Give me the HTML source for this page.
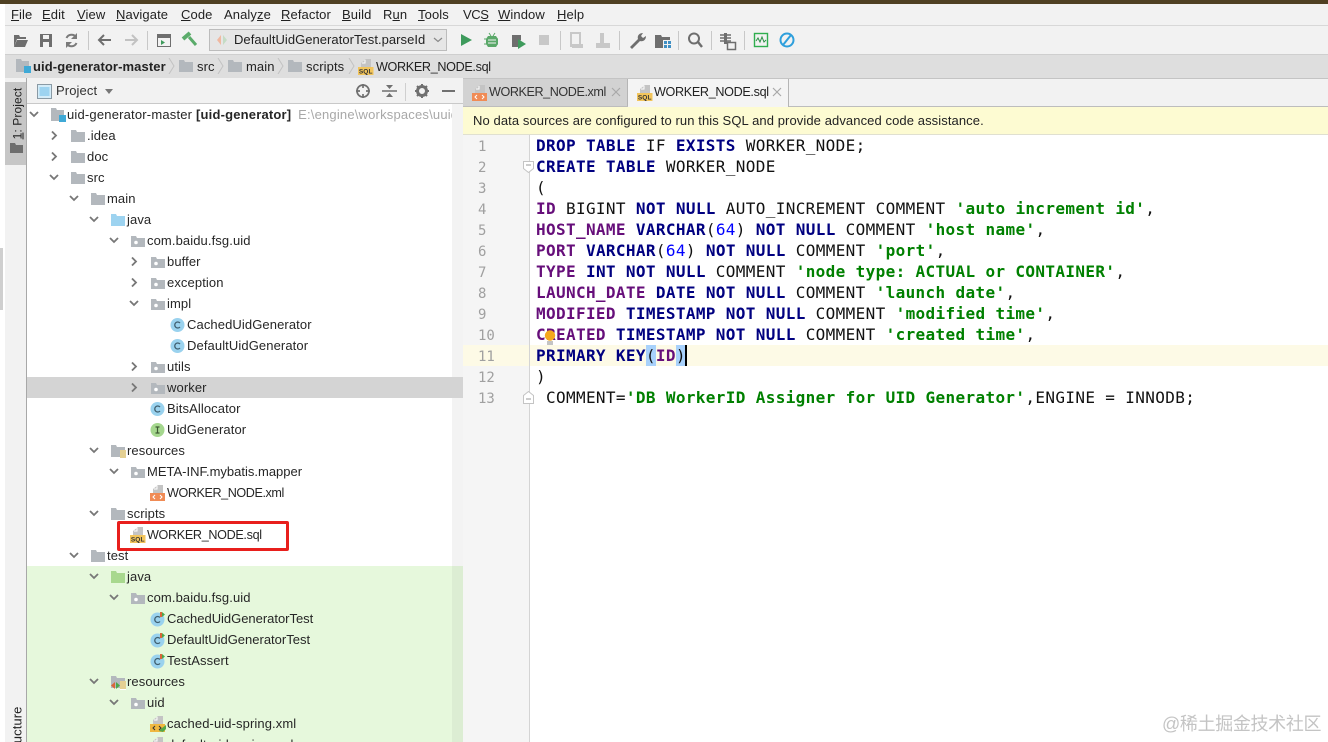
<!DOCTYPE html>
<html style="overflow:hidden;height:742px"><head><meta charset="utf-8"><style>
html,body{margin:0;padding:0}
body{width:1328px;height:742px;overflow:hidden;position:relative;background:#fff;font:13px/21px "Liberation Sans",sans-serif;color:#262626;letter-spacing:.1px}
#w{left:0;top:0;width:1328px;height:742px;overflow:hidden}
div,span.a,svg.a{position:absolute}
svg{display:block}
.m{top:4px;line-height:22px;white-space:nowrap;color:#222}
.m u{text-decoration:underline}
.sp{top:31px;width:1px;height:19px;background:#c8c8c8}
.r{left:0;height:21px;width:452px;white-space:nowrap}
.r .ar{left:calc(var(--x) - 5px);top:5px;width:12px;height:11px}
.r .ic{left:calc(var(--x) + 17px);top:3px;width:16px;height:16px}
.r .tx{left:calc(var(--x) + 34px);top:0}
.r .tx.q,.r .tx.x{top:1px}
.q{font-size:12.6px;letter-spacing:-.33px}
.x{font-size:12.6px;letter-spacing:-.42px}
.c{left:536px;height:21px;font:16px/21px "DejaVu Sans Mono",monospace;letter-spacing:.355px;white-space:pre;color:#111}
.n{left:478px;height:21px;font:14px/21px "DejaVu Sans Mono",monospace;letter-spacing:0;color:#a0a0a0}
b{font-weight:bold}
.k{color:#000080;font-weight:bold}.s{color:#008000;font-weight:bold}.p{color:#660e7a;font-weight:bold}.d{color:#0000ff}
.bc{top:55px;line-height:23px;white-space:nowrap;color:#222}
</style></head><body><div id="w">
<svg width="0" height="0" style="position:absolute"><defs>
<symbol id="dn" viewBox="0 0 12 11"><path d="M2 3l4 4 4-4" fill="none" stroke="#777" stroke-width="1.8"/></symbol>
<symbol id="rt" viewBox="0 0 12 11"><path d="M4 1.500l4 4-4 4" fill="none" stroke="#777" stroke-width="1.8"/></symbol>
<symbol id="f" viewBox="0 0 16 16"><path d="M1 2h5l1 2h8v10H1z" fill="#b3b8bd"/></symbol>
<symbol id="fb" viewBox="0 0 16 16"><path d="M1 2h5l1 2h8v10H1z" fill="#9dd3f0"/></symbol>
<symbol id="fg" viewBox="0 0 16 16"><path d="M1 2h5l1 2h8v10H1z" fill="#a8d88e"/></symbol>
<symbol id="pk" viewBox="0 0 16 16"><path d="M1 3h5l1 2h8v9H1z" fill="#b3b8bd"/><circle cx="6" cy="9.500" r="1.800" fill="#fff"/></symbol>
<symbol id="rs" viewBox="0 0 16 16"><path d="M1 2h5l1 2h8v10H1z" fill="#b3b8bd"/><rect x="10" y="7" width="7" height="9" fill="#fff"/><path d="M10 8h6M10 10h6M10 12h6M10 14h6" stroke="#c9a227"/></symbol>
<symbol id="rs2" viewBox="0 0 16 16"><path d="M1 2h5l1 2h8v10H1z" fill="#b3b8bd"/><rect x="10" y="7" width="7" height="9" fill="#fff"/><path d="M10 8h6M10 10h6M10 12h6M10 14h6" stroke="#c9a227"/><path d="M5 8l-4 3.500 4 3.500z" fill="#d9663a"/><path d="M6 8l4 3.500-4 3.500z" fill="#4aa84a"/></symbol>
<symbol id="cl" viewBox="0 0 16 16"><circle cx="7.500" cy="8" r="7" fill="#9ad2ee"/><path d="M10 6a3 3 0 1 0 0 4" fill="none" stroke="#3f5e6e" stroke-width="1.300"/></symbol>
<symbol id="ct" viewBox="0 0 16 16"><circle cx="7.500" cy="8.500" r="7" fill="#9ad2ee"/><path d="M10 6.500a3 3 0 1 0 0 4" fill="none" stroke="#3f5e6e" stroke-width="1.300"/><path d="M10 1h2v5h-2z" fill="#d9663a"/><path d="M12 1l3 2.500-3 2.500z" fill="#4aa84a"/></symbol>
<symbol id="in" viewBox="0 0 16 16"><circle cx="7.500" cy="8" r="7" fill="#a5d78e"/><path d="M5.500 5h4M5.500 11h4M7.500 5v6" fill="none" stroke="#3d5a33" stroke-width="1.200"/></symbol>
<symbol id="xm" viewBox="0 0 16 16"><path d="M8 0h5v8H3V4z" fill="#c4c4c4"/><path d="M7 1v3H4" fill="none" stroke="#fff"/><rect x="0" y="8" width="15" height="8" fill="#f08b55"/><path d="M5 10l-2 2 2 2M10 10l2 2-2 2" fill="none" stroke="#fff"/></symbol>
<symbol id="xs" viewBox="0 0 16 16"><path d="M8 0h5v8H3V4z" fill="#c4c4c4"/><path d="M7 1v3H4" fill="none" stroke="#fff"/><rect x="0" y="8" width="15" height="8" fill="#f0b840"/><path d="M5 10l-2 2 2 2M9 10l2 2-2 2" fill="none" stroke="#333"/><path d="M9 15l3-3 4-3 0 4-3 3z" fill="#55a84a"/></symbol>
<symbol id="sq" viewBox="0 0 16 16"><path d="M8 0h5v8H3V4z" fill="#c4c4c4"/><path d="M7 1v3H4" fill="none" stroke="#fff"/><rect x="0" y="8" width="15.500" height="8" fill="#f2c55c"/><text x="7.700" y="14.700" text-anchor="middle" font-family="Liberation Sans" font-weight="bold" font-size="6.500" fill="#333">SQL</text></symbol>
<symbol id="ro" viewBox="0 0 18 16"><path d="M1 1h5l1 2h7v11H1z" fill="#b3b8bd"/><rect x="9" y="8" width="7" height="7" fill="#3fa9d6"/></symbol>
</defs></svg>

<!-- chrome backgrounds -->
<div style="left:0;top:0;width:1328px;height:4px;background:#4f4023"></div>
<div style="left:5px;top:4px;width:1323px;height:74px;background:#f2f2f2"></div>
<div style="left:5px;top:25px;width:1323px;height:1px;background:#d8d8d8"></div>
<div style="left:5px;top:54px;width:1323px;height:24px;background:#dedede;border-top:1px solid #cfcfcf;box-sizing:border-box"></div>
<div style="left:0;top:248px;width:3px;height:62px;background:#cfcfcf"></div>
<div style="left:5px;top:78px;width:22px;height:664px;background:#f2f2f2;border-right:1px solid #a8a8a8;box-sizing:border-box"></div>
<div style="left:5px;top:82px;width:21px;height:83px;background:#c6c6c6"></div>
<div style="left:27px;top:78px;width:436px;height:26px;background:#f2f2f2;border-bottom:1px solid #c9c9c9;box-sizing:border-box"></div>
<div style="left:463px;top:78px;width:865px;height:29px;background:#f2f2f2;border-top:1px solid #c4c4c4;border-bottom:1px solid #bdbdbd;box-sizing:border-box"></div>

<!-- menu -->
<div class="m" style="left:11px"><u>F</u>ile</div>
<div class="m" style="left:42px"><u>E</u>dit</div>
<div class="m" style="left:77px"><u>V</u>iew</div>
<div class="m" style="left:116px"><u>N</u>avigate</div>
<div class="m" style="left:181px"><u>C</u>ode</div>
<div class="m" style="left:224px">Analy<u>z</u>e</div>
<div class="m" style="left:281px"><u>R</u>efactor</div>
<div class="m" style="left:342px"><u>B</u>uild</div>
<div class="m" style="left:383px">R<u>u</u>n</div>
<div class="m" style="left:418px"><u>T</u>ools</div>
<div class="m" style="left:463px;letter-spacing:-.4px">VC<u>S</u></div>
<div class="m" style="left:498px"><u>W</u>indow</div>
<div class="m" style="left:557px"><u>H</u>elp</div>

<!-- toolbar -->
<svg class="a" style="left:0;top:26px" width="810" height="28" viewBox="0 0 810 28" fill="none">
<path d="M14 9h5l1 2h6v2h-9l-3 8z" fill="#6e6e6e"/><path d="M17 14h11l-3 7H14z" fill="#6e6e6e"/>
<path d="M40 8h12v13H40z" fill="#6e6e6e"/><rect x="43" y="9" width="6" height="4" fill="#f2f2f2"/><rect x="43" y="16" width="6" height="5" fill="#f2f2f2"/>
<path d="M76 11a5.500 5.500 0 0 0-9.500 1M67 18a5.500 5.500 0 0 0 9.500-1" stroke="#7a7a7a" stroke-width="2"/><path d="M77 7v6h-6zM66 22v-6h6z" fill="#7a7a7a"/>
<path d="M99 14h12M104 9l-5 5 5 5" stroke="#6e6e6e" stroke-width="2"/>
<path d="M125 14h12M132 9l5 5-5 5" stroke="#c2c2c2" stroke-width="2"/>
<rect x="157.500" y="8.500" width="13" height="12" stroke="#6e6e6e"/><path d="M157 9h14v3h-14z" fill="#6e6e6e"/><path d="M161 14l4 2.500-4 2.500z" fill="#3e9b5c"/>
<path d="M189 11l7 8" stroke="#5aab6a" stroke-width="3"/><path d="M183 13l7-6" stroke="#5aab6a" stroke-width="4"/>
<path d="M461 8l11 6-11 6z" fill="#3e9b5c"/>
<path d="M488 10h8l2 3v5l-2 3h-8l-2-3v-5z" fill="#5aa869"/><path d="M489 7l2 3M495 7l-2 3M484 13h14M484 18h14" stroke="#5aa869"/><path d="M488 14h8M488 17h8" stroke="#f2f2f2"/>
<path d="M512 9h9v5l-3 2v5h-6z" fill="#6e6e6e"/><path d="M518 13l8 5-8 5z" fill="#3e9b5c"/>
<rect x="539" y="9" width="10" height="10" fill="#c8c8c8"/>
<path d="M571 7h9v13h-9z" stroke="#c8c8c8" stroke-width="2"/><path d="M572 22h11v-4h-11z" fill="#c8c8c8"/>
<path d="M600 7v10h-4v5h14v-5h-6V7z" fill="#c8c8c8"/>
<path d="M630 21l8-8c-1-3 1-6 5-6l-2 3 2 2 3-2c0 4-3 6-6 5l-8 8z" fill="#6e6e6e"/>
<path d="M655 9h6l1 2h8v11h-15z" fill="#6e6e6e"/><rect x="663" y="14" width="8" height="8" fill="#f2f2f2"/><path d="M664 15h3v3h-3zM668 15h3v3h-3zM664 19h3v3h-3zM668 19h3v3h-3z" fill="#3f8fc4"/>
<circle cx="694" cy="12.500" r="5" stroke="#6e6e6e" stroke-width="2"/><path d="M698 16l4 5" stroke="#6e6e6e" stroke-width="2.400"/>
<path d="M720 9h11M720 12h11M720 15h11" stroke="#6e6e6e" stroke-width="1.500"/><rect x="724" y="7" width="3" height="11" fill="#6e6e6e"/><rect x="727.500" y="16.500" width="8" height="7" fill="#f2f2f2" stroke="#6e6e6e" stroke-width="1.500"/>
<rect x="754.500" y="7.500" width="13" height="13" stroke="#2fae4e" stroke-width="1.400"/><path d="M756 15l2-3 2 4 2-5 2 5 2-2" stroke="#2a8f44"/>
<circle cx="787" cy="14" r="6.500" stroke="#2e9fdc" stroke-width="2"/><path d="M783 19l8-10" stroke="#2e9fdc" stroke-width="2"/>
</svg>
<div class="sp" style="left:88px"></div><div class="sp" style="left:147px"></div><div class="sp" style="left:560px"></div><div class="sp" style="left:619px"></div><div class="sp" style="left:678px"></div><div class="sp" style="left:711px"></div><div class="sp" style="left:744px"></div>
<div style="left:209px;top:29px;width:238px;height:22px;background:#e6e6e6;border:1px solid #bcbcbc;box-sizing:border-box"></div>
<svg class="a" style="left:216px;top:34px" width="13" height="12"><path d="M5 1L1 6l4 5z" fill="#f0b8a0"/><path d="M7 1l4 5-4 5z" fill="#c5dcc5"/></svg>
<div style="left:234px;top:29px;line-height:22px;color:#222;white-space:nowrap;letter-spacing:.04px">DefaultUidGeneratorTest.parseId</div>
<svg class="a" style="left:433px;top:36px" width="10" height="8"><path d="M1 2l4 3.500 4-3.500" fill="none" stroke="#888" stroke-width="1.200"/></svg>

<!-- breadcrumb -->
<svg class="a" style="left:15px;top:58px" width="18" height="16"><use href="#ro"/></svg>
<div class="bc" style="left:33px"><b>uid-generator-master</b></div>
<svg class="a" style="left:168px;top:58px" width="8" height="16"><path d="M1 0l5 8-5 8" fill="none" stroke="#c2c2c2"/></svg>
<svg class="a" style="left:178px;top:58px" width="16" height="16"><use href="#f"/></svg>
<div class="bc" style="left:197px">src</div>
<svg class="a" style="left:217px;top:58px" width="8" height="16"><path d="M1 0l5 8-5 8" fill="none" stroke="#c2c2c2"/></svg>
<svg class="a" style="left:227px;top:58px" width="16" height="16"><use href="#f"/></svg>
<div class="bc" style="left:246px">main</div>
<svg class="a" style="left:277px;top:58px" width="8" height="16"><path d="M1 0l5 8-5 8" fill="none" stroke="#c2c2c2"/></svg>
<svg class="a" style="left:287px;top:58px" width="16" height="16"><use href="#f"/></svg>
<div class="bc" style="left:306px">scripts</div>
<svg class="a" style="left:348px;top:58px" width="8" height="16"><path d="M1 0l5 8-5 8" fill="none" stroke="#c2c2c2"/></svg>
<svg class="a" style="left:358px;top:59px" width="16" height="16"><use href="#sq"/></svg>
<div class="bc q" style="left:376px;top:56px">WORKER_NODE.sql</div>

<!-- left tool strip -->
<div style="left:-22px;top:103px;width:80px;height:21px;transform:rotate(-90deg);text-align:center;white-space:nowrap;color:#222;font-size:12px"><u>1</u>: Project</div>
<svg class="a" style="left:10px;top:143px" width="14" height="10"><path d="M0 0h5l1 2h7v8H0z" fill="#6e6e6e"/></svg>
<div style="left:-9px;top:722px;width:52px;height:21px;transform:rotate(-90deg);white-space:nowrap;color:#222;text-align:right">ucture</div>

<!-- project header -->
<svg class="a" style="left:37px;top:84px" width="15" height="15"><rect x=".5" y=".5" width="14" height="14" fill="#d4ecf8" stroke="#8a9aa5"/><rect x="2.500" y="3" width="10" height="9" fill="#9dd3f0"/></svg>
<div style="left:56px;top:80px;color:#333">Project</div>
<svg class="a" style="left:104px;top:88px" width="10" height="7"><path d="M1 1h8L5 6z" fill="#777"/></svg>
<svg class="a" style="left:355px;top:83px" width="105" height="16" fill="none">
<circle cx="8" cy="8" r="6" stroke="#707070" stroke-width="1.700"/><path d="M8 1v4M8 11v4M1 8h4M11 8h4" stroke="#707070" stroke-width="1.700"/>
<path d="M27 8h15" stroke="#707070" stroke-width="1.500"/><path d="M31 2h7l-3.500 4zM31 14h7l-3.500-4z" fill="#707070"/>
<circle cx="67" cy="8" r="4.500" stroke="#707070" stroke-width="3"/><path d="M67 1v3M67 12v3M60 8h3M71 8h3M62 3l2 2M70 11l2 2M72 3l-2 2M62 13l2-2" stroke="#707070" stroke-width="2"/>
<path d="M87 8h13" stroke="#707070" stroke-width="2"/>
</svg>
<div style="left:405px;top:83px;width:1px;height:18px;background:#cfcfcf"></div>

<!-- tree backgrounds -->
<div style="left:27px;top:377px;width:436px;height:21px;background:#d4d4d4"></div>
<div style="left:27px;top:566px;width:425px;height:176px;background:#e6f8dc"></div>
<div style="left:452px;top:104px;width:11px;height:273px;background:#f3f3f3"></div>
<div style="left:452px;top:398px;width:11px;height:168px;background:#f3f3f3"></div>
<div style="left:452px;top:566px;width:11px;height:176px;background:#dcedd3"></div>

<!-- tree -->
<div class="r" style="top:104px;--x:33px;width:452px;overflow:hidden"><svg class="a ar"><use href="#dn"/></svg><svg class="a ic" style="width:18px"><use href="#ro"/></svg><span class="a tx" style="letter-spacing:.19px">uid-generator-master <b>[uid-generator]</b> <span style="color:#a8a8a8;margin-left:3px">E:\engine\workspaces\uuid\</span></span></div>
<div class="r" style="top:125px;--x:53px"><svg class="a ar"><use href="#rt"/></svg><svg class="a ic"><use href="#f"/></svg><span class="a tx">.idea</span></div>
<div class="r" style="top:146px;--x:53px"><svg class="a ar"><use href="#rt"/></svg><svg class="a ic"><use href="#f"/></svg><span class="a tx">doc</span></div>
<div class="r" style="top:167px;--x:53px"><svg class="a ar"><use href="#dn"/></svg><svg class="a ic"><use href="#f"/></svg><span class="a tx">src</span></div>
<div class="r" style="top:188px;--x:73px"><svg class="a ar"><use href="#dn"/></svg><svg class="a ic"><use href="#f"/></svg><span class="a tx">main</span></div>
<div class="r" style="top:209px;--x:93px"><svg class="a ar"><use href="#dn"/></svg><svg class="a ic"><use href="#fb"/></svg><span class="a tx">java</span></div>
<div class="r" style="top:230px;--x:113px"><svg class="a ar"><use href="#dn"/></svg><svg class="a ic"><use href="#pk"/></svg><span class="a tx">com.baidu.fsg.uid</span></div>
<div class="r" style="top:251px;--x:133px"><svg class="a ar"><use href="#rt"/></svg><svg class="a ic"><use href="#pk"/></svg><span class="a tx">buffer</span></div>
<div class="r" style="top:272px;--x:133px"><svg class="a ar"><use href="#rt"/></svg><svg class="a ic"><use href="#pk"/></svg><span class="a tx">exception</span></div>
<div class="r" style="top:293px;--x:133px"><svg class="a ar"><use href="#dn"/></svg><svg class="a ic"><use href="#pk"/></svg><span class="a tx">impl</span></div>
<div class="r" style="top:314px;--x:153px"><svg class="a ic"><use href="#cl"/></svg><span class="a tx">CachedUidGenerator</span></div>
<div class="r" style="top:335px;--x:153px"><svg class="a ic"><use href="#cl"/></svg><span class="a tx">DefaultUidGenerator</span></div>
<div class="r" style="top:356px;--x:133px"><svg class="a ar"><use href="#rt"/></svg><svg class="a ic"><use href="#pk"/></svg><span class="a tx">utils</span></div>
<div class="r" style="top:377px;--x:133px"><svg class="a ar"><use href="#rt"/></svg><svg class="a ic"><use href="#pk"/></svg><span class="a tx">worker</span></div>
<div class="r" style="top:398px;--x:133px"><svg class="a ic"><use href="#cl"/></svg><span class="a tx">BitsAllocator</span></div>
<div class="r" style="top:419px;--x:133px"><svg class="a ic"><use href="#in"/></svg><span class="a tx">UidGenerator</span></div>
<div class="r" style="top:440px;--x:93px"><svg class="a ar"><use href="#dn"/></svg><svg class="a ic"><use href="#rs"/></svg><span class="a tx">resources</span></div>
<div class="r" style="top:461px;--x:113px"><svg class="a ar"><use href="#dn"/></svg><svg class="a ic"><use href="#pk"/></svg><span class="a tx" style="letter-spacing:0">META-INF.mybatis.mapper</span></div>
<div class="r" style="top:482px;--x:133px"><svg class="a ic"><use href="#xm"/></svg><span class="a tx x" style="letter-spacing:-.42px">WORKER_NODE.xml</span></div>
<div class="r" style="top:503px;--x:93px"><svg class="a ar"><use href="#dn"/></svg><svg class="a ic"><use href="#f"/></svg><span class="a tx">scripts</span></div>
<div class="r" style="top:524px;--x:113px"><svg class="a ic"><use href="#sq"/></svg><span class="a tx q">WORKER_NODE.sql</span></div>
<div class="r" style="top:545px;--x:73px"><svg class="a ar"><use href="#dn"/></svg><svg class="a ic"><use href="#f"/></svg><span class="a tx">test</span></div>
<div class="r" style="top:566px;--x:93px"><svg class="a ar"><use href="#dn"/></svg><svg class="a ic"><use href="#fg"/></svg><span class="a tx">java</span></div>
<div class="r" style="top:587px;--x:113px"><svg class="a ar"><use href="#dn"/></svg><svg class="a ic"><use href="#pk"/></svg><span class="a tx">com.baidu.fsg.uid</span></div>
<div class="r" style="top:608px;--x:133px"><svg class="a ic"><use href="#ct"/></svg><span class="a tx" style="letter-spacing:-.02px">CachedUidGeneratorTest</span></div>
<div class="r" style="top:629px;--x:133px"><svg class="a ic"><use href="#ct"/></svg><span class="a tx" style="letter-spacing:0">DefaultUidGeneratorTest</span></div>
<div class="r" style="top:650px;--x:133px"><svg class="a ic"><use href="#ct"/></svg><span class="a tx">TestAssert</span></div>
<div class="r" style="top:671px;--x:93px"><svg class="a ar"><use href="#dn"/></svg><svg class="a ic"><use href="#rs2"/></svg><span class="a tx">resources</span></div>
<div class="r" style="top:692px;--x:113px"><svg class="a ar"><use href="#dn"/></svg><svg class="a ic"><use href="#pk"/></svg><span class="a tx">uid</span></div>
<div class="r" style="top:713px;--x:133px"><svg class="a ic"><use href="#xs"/></svg><span class="a tx">cached-uid-spring.xml</span></div>
<div class="r" style="top:734px;--x:133px"><svg class="a ic"><use href="#xs"/></svg><span class="a tx">default-uid-spring.xml</span></div>

<div style="left:117px;top:521px;width:172px;height:30px;border:3px solid #e81f1c;border-radius:2px;box-sizing:border-box"></div>

<!-- tabs -->
<div style="left:463px;top:79px;width:165px;height:27px;background:#d2d2d2;border-right:1px solid #b5b5b5;box-sizing:border-box"></div>
<div style="left:628px;top:79px;width:161px;height:28px;background:#f4f4f4;border-right:1px solid #b5b5b5;box-sizing:border-box"></div>
<svg class="a" style="left:472px;top:85px" width="16" height="16"><use href="#xm"/></svg>
<div class="x" style="left:489px;top:82px;color:#333;white-space:nowrap">WORKER_NODE.xml</div>
<svg class="a" style="left:611px;top:87px" width="10" height="10"><path d="M1 1l8 8M9 1l-8 8" stroke="#a8a8a8" stroke-width="1.200"/></svg>
<svg class="a" style="left:637px;top:85px" width="16" height="16"><use href="#sq"/></svg>
<div class="q" style="left:654px;top:82px;color:#222;white-space:nowrap">WORKER_NODE.sql</div>
<svg class="a" style="left:772px;top:87px" width="10" height="10"><path d="M1 1l8 8M9 1l-8 8" stroke="#a8a8a8" stroke-width="1.200"/></svg>

<!-- notification -->
<div style="left:463px;top:107px;width:865px;height:28px;background:#fdfbd2;border-bottom:1px solid #e0e0d0;box-sizing:border-box"></div>
<div style="left:473px;top:110px;white-space:nowrap;color:#222;letter-spacing:.09px">No data sources are configured to run this SQL and provide advanced code assistance.</div>

<!-- editor -->
<div style="left:463px;top:135px;width:66px;height:607px;background:#f5f5f5"></div>
<div style="left:463px;top:345px;width:865px;height:21px;background:#fdfae6"></div>
<div style="left:529px;top:135px;width:1px;height:607px;background:#d4d4d4"></div>
<div style="left:646px;top:345px;width:10px;height:21px;background:#a8d1fb"></div>
<div style="left:676px;top:345px;width:10px;height:21px;background:#a8d1fb"></div>

<div class="n" style="top:137px">1</div><div class="n" style="top:158px">2</div><div class="n" style="top:179px">3</div><div class="n" style="top:200px">4</div><div class="n" style="top:221px">5</div><div class="n" style="top:242px">6</div><div class="n" style="top:263px">7</div><div class="n" style="top:284px">8</div><div class="n" style="top:305px">9</div><div class="n" style="top:326px">10</div><div class="n" style="top:347px">11</div><div class="n" style="top:368px">12</div><div class="n" style="top:389px">13</div>

<svg class="a" style="left:523px;top:161px" width="12" height="13"><path d="M.5.5h10v7l-5 4-5-4z" fill="#fff" stroke="#c4c4c4"/><path d="M3 4h5" stroke="#999"/></svg>
<svg class="a" style="left:523px;top:391px" width="12" height="13"><path d="M.5 12.500h10v-8l-5-4-5 4z" fill="#fff" stroke="#c4c4c4"/><path d="M3 8h5" stroke="#999"/></svg>

<div class="c" style="top:135px"><span class="k">DROP TABLE</span> IF <span class="k">EXISTS</span> WORKER_NODE;</div>
<div class="c" style="top:156px"><span class="k">CREATE TABLE</span> WORKER_NODE</div>
<div class="c" style="top:177px">(</div>
<div class="c" style="top:198px"><span class="p">ID</span> BIGINT <span class="k">NOT NULL</span> AUTO_INCREMENT COMMENT <span class="s">'auto increment id'</span>,</div>
<div class="c" style="top:219px"><span class="p">HOST_NAME</span> <span class="k">VARCHAR</span>(<span class="d">64</span>) <span class="k">NOT NULL</span> COMMENT <span class="s">'host name'</span>,</div>
<div class="c" style="top:240px"><span class="p">PORT</span> <span class="k">VARCHAR</span>(<span class="d">64</span>) <span class="k">NOT NULL</span> COMMENT <span class="s">'port'</span>,</div>
<div class="c" style="top:261px"><span class="p">TYPE</span> <span class="k">INT NOT NULL</span> COMMENT <span class="s">'node type: ACTUAL or CONTAINER'</span>,</div>
<div class="c" style="top:282px"><span class="p">LAUNCH_DATE</span> <span class="k">DATE NOT NULL</span> COMMENT <span class="s">'launch date'</span>,</div>
<div class="c" style="top:303px"><span class="p">MODIFIED</span> <span class="k">TIMESTAMP NOT NULL</span> COMMENT <span class="s">'modified time'</span>,</div>
<div class="c" style="top:324px"><span class="p">CREATED</span> <span class="k">TIMESTAMP NOT NULL</span> COMMENT <span class="s">'created time'</span>,</div>
<div class="c" style="top:345px"><span class="k">PRIMARY KEY</span>(<span class="p">ID</span>)</div>
<div class="c" style="top:366px">)</div>
<div class="c" style="top:387px"> COMMENT=<span class="s">'DB WorkerID Assigner for UID Generator'</span>,ENGINE = INNODB;</div>

<div style="left:685px;top:345px;width:2px;height:21px;background:#000"></div>
<svg class="a" style="left:544px;top:329px" width="12" height="16"><circle cx="6" cy="6.500" r="5.200" fill="#f5a81c"/><path d="M3 13h6M3 15h6" stroke="#8a8a8a"/></svg>

<!-- watermark -->
<div style="left:1162px;top:711px;line-height:26px;font-family:'Liberation Sans','Noto Sans CJK SC',sans-serif;font-size:18px;letter-spacing:-.35px;color:#c4c4c4;white-space:nowrap">@稀土掘金技术社区</div>
</div></body></html>
